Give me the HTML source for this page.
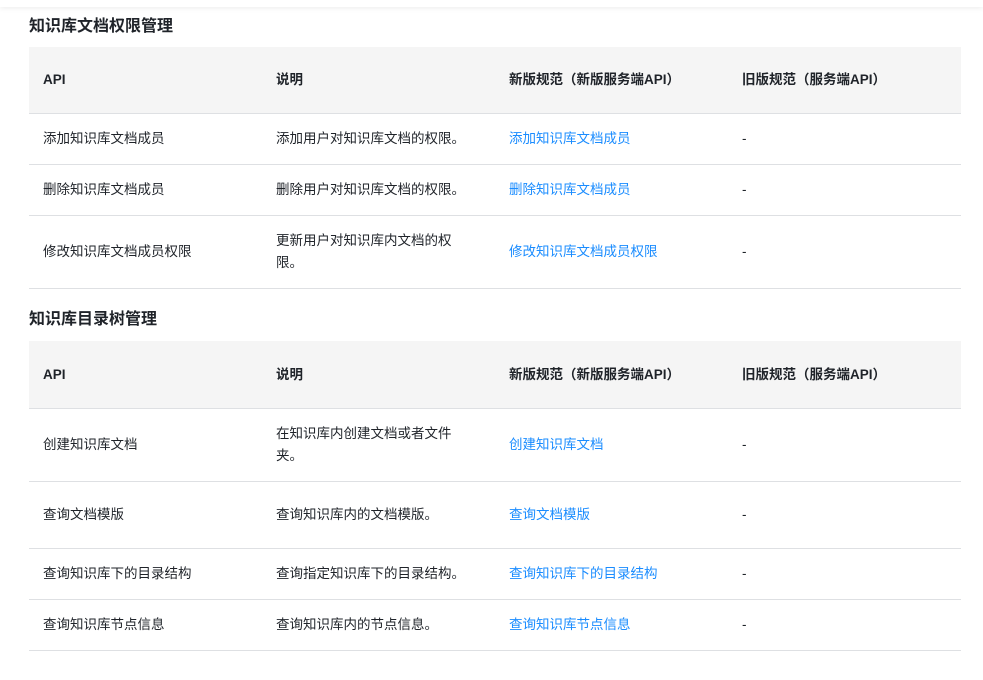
<!DOCTYPE html>
<html><head><meta charset="utf-8"><style>
body{margin:0;width:983px;height:680px;background:#fff;font-family:"Liberation Sans","Noto Sans CJK SC",sans-serif;color:#1f2329;position:relative;overflow:hidden}
.top{position:absolute;left:0;top:0;width:983px;height:7px;background:#fff;box-shadow:0 2px 5px rgba(0,0,0,.06)}
h2{position:absolute;left:29px;margin:0;font-size:16px;font-weight:600;line-height:20px;color:#1f2329}
.t{position:absolute;left:29px;width:932px}
.r{display:flex;border-bottom:1px solid #dee0e3;box-sizing:border-box}
.r.h{background:#f5f5f5;font-weight:600;color:#1f2329}
.c{width:233px;padding:0 14px;box-sizing:border-box;display:flex;align-items:center;font-size:13.5px;line-height:22px}
a{color:#1a8cff;text-decoration:none}
</style></head><body>
<div class="top"></div>
<h2 style="top:17px">知识库文档权限管理</h2>
<div class="t" style="top:47px">
<div class="r h" style="height:67px"><div class="c">API</div><div class="c">说明</div><div class="c">新版规范（新版服务端API）</div><div class="c">旧版规范（服务端API）</div></div>
<div class="r" style="height:51px"><div class="c">添加知识库文档成员</div><div class="c">添加用户对知识库文档的权限。</div><div class="c"><a>添加知识库文档成员</a></div><div class="c">-</div></div>
<div class="r" style="height:51px"><div class="c">删除知识库文档成员</div><div class="c">删除用户对知识库文档的权限。</div><div class="c"><a>删除知识库文档成员</a></div><div class="c">-</div></div>
<div class="r" style="height:73px"><div class="c">修改知识库文档成员权限</div><div class="c"><span>更新用户对知识库内文档的权<br>限。</span></div><div class="c"><a>修改知识库文档成员权限</a></div><div class="c">-</div></div>
</div>
<h2 style="top:310px">知识库目录树管理</h2>
<div class="t" style="top:341px">
<div class="r h" style="height:68px"><div class="c">API</div><div class="c">说明</div><div class="c">新版规范（新版服务端API）</div><div class="c">旧版规范（服务端API）</div></div>
<div class="r" style="height:73px"><div class="c">创建知识库文档</div><div class="c"><span>在知识库内创建文档或者文件<br>夹。</span></div><div class="c"><a>创建知识库文档</a></div><div class="c">-</div></div>
<div class="r" style="height:67px"><div class="c">查询文档模版</div><div class="c">查询知识库内的文档模版。</div><div class="c"><a>查询文档模版</a></div><div class="c">-</div></div>
<div class="r" style="height:51px"><div class="c">查询知识库下的目录结构</div><div class="c">查询指定知识库下的目录结构。</div><div class="c"><a>查询知识库下的目录结构</a></div><div class="c">-</div></div>
<div class="r" style="height:51px"><div class="c">查询知识库节点信息</div><div class="c">查询知识库内的节点信息。</div><div class="c"><a>查询知识库节点信息</a></div><div class="c">-</div></div>
</div>
</body></html>
